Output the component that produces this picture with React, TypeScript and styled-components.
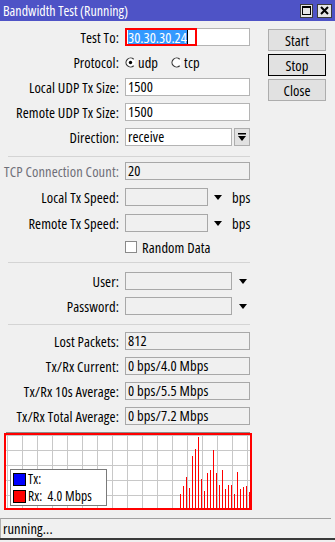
import React from "react";
import styled, { createGlobalStyle } from "styled-components";

const FONT = `"Open Sans", "Liberation Sans", Arial, sans-serif`;

const Global = createGlobalStyle`
  html, body { margin: 0; padding: 0; background: #f0f0f0; }
  body { font-family: ${FONT}; font-size: 14.5px; font-stretch: 75%; letter-spacing: 0.1px; color: #000; }
`;

const Window = styled.div`
  width: 335px;
  height: 542px;
  display: flex;
  flex-direction: column;
  background: #f0f0f0;
  overflow: hidden;
`;

const TitleBar = styled.div`
  height: 21px;
  flex: none;
  background: #4e53c6;
  color: #fff;
  display: flex;
  align-items: center;
  padding: 0 3px 0 3px;
  font-size: 14px;
  letter-spacing: 0;
`;

const TitleText = styled.div`
  flex: 1;
  white-space: nowrap;
`;

const TitleButtons = styled.div`
  display: flex;
  gap: 4px;
`;

const TitleBtn = styled.div<{ $w: number }>`
  width: ${(p) => p.$w}px;
  height: 14px;
  box-sizing: border-box;
  background: #e6e6e6;
  border: 1px solid #3c3c3c;
  display: flex;
  align-items: center;
  justify-content: center;
`;

const Body = styled.div`
  display: flex;
  padding-top: 7px;
`;

const Form = styled.div`
  width: 252px;
  display: flex;
  flex-direction: column;
`;

const Section = styled.div<{ $pt: number; $gap: number }>`
  display: flex;
  flex-direction: column;
  padding-top: ${(p) => p.$pt}px;
  gap: ${(p) => p.$gap}px;
`;

const Sep = styled.div<{ $mt: number }>`
  margin: ${(p) => p.$mt}px 0 0 8px;
  width: 242px;
  height: 1px;
  background: #d4d4d4;
`;

const Row = styled.div<{ $h?: number }>`
  display: flex;
  align-items: center;
  height: ${(p) => p.$h ?? 18}px;
`;

const Label = styled.div<{ $dim?: boolean }>`
  width: 119px;
  margin-right: 6px;
  text-align: right;
  white-space: nowrap;
  color: ${(p) => (p.$dim ? "#6f6f78" : "#000")};
`;

const Field = styled.div<{ $w?: number; $ro?: boolean }>`
  position: relative;
  width: ${(p) => p.$w ?? 125}px;
  height: 18px;
  box-sizing: border-box;
  border: 1px solid ${(p) => (p.$ro ? "#a8a8a8" : "#b4b4b4")};
  background: ${(p) => (p.$ro ? "#f0f0f0" : "#fff")};
  padding: 0 2px;
  line-height: 16px;
  white-space: nowrap;
  display: flex;
  align-items: center;
`;

const Selected = styled.span`
  background: #3399ff;
  color: #fff;
  line-height: 15px;
  letter-spacing: 0;
`;

const Caret = styled.span`
  display: inline-block;
  width: 1px;
  height: 15px;
  background: #000;
`;

const Annotation = styled.div`
  position: absolute;
  left: -1px;
  top: -1px;
  width: 72px;
  height: 18px;
  box-sizing: border-box;
  border: 2px solid #ff0000;
`;

const RadioItem = styled.div`
  display: flex;
  align-items: center;
  margin-right: 13px;
  svg {
    margin-right: 2px;
  }
`;

const DropBtn = styled.div`
  width: 16px;
  height: 18px;
  margin-left: 2px;
  box-sizing: border-box;
  background: #e1e1e1;
  border: 1px solid #adadad;
  display: flex;
  align-items: center;
  justify-content: center;
`;

const Arrow = styled.div<{ $ml: number }>`
  margin-left: ${(p) => p.$ml}px;
  display: flex;
  align-items: center;
`;

const Unit = styled.span`
  margin-left: 10px;
`;

const Check = styled.div`
  width: 12px;
  height: 12px;
  box-sizing: border-box;
  border: 1px solid #8a8a8a;
  background: #fff;
  margin: 0 5px 0 125px;
`;

const Buttons = styled.div`
  margin-left: 16px;
  padding-top: 1px;
  display: flex;
  flex-direction: column;
  gap: 3px;
`;

const Button = styled.div<{ $default?: boolean }>`
  width: 58px;
  height: 22px;
  box-sizing: border-box;
  background: #e1e1e1;
  border: 1px solid ${(p) => (p.$default ? "#000" : "#adadad")};
  display: flex;
  align-items: center;
  justify-content: center;
`;

const ChartWrap = styled.div`
  margin: 7px 0 0 4px;
  width: 248px;
  display: flex;
  flex-direction: column;
`;

const ChartEdge = styled.div`
  margin: 0 2px;
  height: 1px;
  background: #8c8c8c;
`;

const ChartBox = styled.div`
  position: relative;
  height: 77px;
  box-sizing: border-box;
  border: 2px solid #ff0000;
  background: #fff;
  svg {
    display: block;
  }
`;

const Legend = styled.div`
  position: absolute;
  left: 4px;
  top: 34px;
  width: 97px;
  height: 37px;
  box-sizing: border-box;
  border: 1px solid #7a7a7a;
  background: #fff;
  padding: 3px 0 0 2px;
  display: flex;
  flex-direction: column;
  gap: 4px;
  font-size: 13.5px;
`;

const LegendRow = styled.div`
  display: flex;
  align-items: center;
  height: 13px;
  line-height: 13px;
  white-space: pre;
`;

const Swatch = styled.div<{ $c: string }>`
  width: 13px;
  height: 13px;
  box-sizing: border-box;
  border: 1px solid #000;
  background: ${(p) => p.$c};
  margin-right: 2px;
`;

const Status = styled.div`
  margin: 8px 4px 0 0;
  height: 20px;
  box-sizing: border-box;
  border-top: 1px solid #a0a0a0;
  border-left: 1px solid #b0b0b0;
  padding-left: 2px;
  display: flex;
  align-items: center;
`;

const BottomEdge = styled.div`
  height: 2px;
  background: #3a3a3a;
`;

const Radio = ({ on }: { on: boolean }) => (
  <svg width="11" height="11" viewBox="0 0 11 11">
    <circle cx="5.5" cy="5.5" r="4.5" fill="#fff" />
    <path d="M8.7 2.3 A4.5 4.5 0 1 0 8.7 8.7" fill="none" stroke="#333" strokeWidth="1.2" />
    {on && <circle cx="5.5" cy="5.5" r="1.7" fill="#000" />}
  </svg>
);

const Tri = () => (
  <svg width="8" height="5" viewBox="0 0 8 5">
    <polygon points="0,0 8,0 4,5" fill="#000" />
  </svg>
);

const BARS = [494, 486, 477, 488, 456, 449, 437, 479, 491, 473, 470, 450, 473, 485, 470, 489, 485, 485, 494, 472, 489, 487, 486, 492];

const Chart = () => {
  const W = 244;
  const H = 73;
  const vx: number[] = [];
  for (let x = 1.5; x < W; x += 15) vx.push(x);
  const hy = [0.5, 15.5, 30.5, 45.5, 60.5];
  return (
    <svg width={W} height={H} viewBox={`0 0 ${W} ${H}`}>
      {vx.map((x) => (
        <line key={"v" + x} x1={x} y1={0} x2={x} y2={H} stroke="#c8c8c8" strokeWidth="1" />
      ))}
      {hy.map((y) => (
        <line key={"h" + y} x1={0} y1={y} x2={W} y2={y} stroke="#c8c8c8" strokeWidth="1" />
      ))}
      {BARS.map((t, i) => (
        <rect key={i} x={174 + i * 3} y={t - 435} width={1} height={H - (t - 435)} fill="#ff0000" />
      ))}
    </svg>
  );
};

export default function App() {
  return (
    <>
      <Global />
      <Window>
        <TitleBar>
          <TitleText>Bandwidth Test (Running)</TitleText>
          <TitleButtons>
            <TitleBtn $w={13}>
              <svg width="9" height="9" viewBox="0 0 9 9">
                <rect x="0.5" y="0.5" width="8" height="8" fill="none" stroke="#000" />
                <rect x="0" y="0" width="9" height="2" fill="#000" />
              </svg>
            </TitleBtn>
            <TitleBtn $w={15}>
              <svg width="9" height="9" viewBox="0 0 9 9">
                <path d="M1 1 L8 8 M8 1 L1 8" stroke="#000" strokeWidth="2" />
              </svg>
            </TitleBtn>
          </TitleButtons>
        </TitleBar>
        <Body>
          <Form>
            <Section $pt={0} $gap={7}>
              <Row>
                <Label>Test To:</Label>
                <Field>
                  <Selected>30.30.30.24</Selected>
                  <Caret />
                  <Annotation />
                </Field>
              </Row>
              <Row>
                <Label>Protocol:</Label>
                <RadioItem>
                  <Radio on />
                  udp
                </RadioItem>
                <RadioItem>
                  <Radio on={false} />
                  tcp
                </RadioItem>
              </Row>
              <Row>
                <Label>Local UDP Tx Size:</Label>
                <Field>1500</Field>
              </Row>
              <Row>
                <Label>Remote UDP Tx Size:</Label>
                <Field>1500</Field>
              </Row>
              <Row>
                <Label>Direction:</Label>
                <Field $w={107}>receive</Field>
                <DropBtn>
                  <svg width="8" height="8" viewBox="0 0 8 8">
                    <rect x="0" y="0" width="8" height="1.5" fill="#000" />
                    <polygon points="0,3 8,3 4,8" fill="#000" />
                  </svg>
                </DropBtn>
              </Row>
            </Section>
            <Sep $mt={10} />
            <Section $pt={5} $gap={8}>
              <Row>
                <Label $dim>TCP Connection Count:</Label>
                <Field $ro>20</Field>
              </Row>
              <Row>
                <Label>Local Tx Speed:</Label>
                <Field $ro $w={83} />
                <Arrow $ml={6}>
                  <Tri />
                </Arrow>
                <Unit>bps</Unit>
              </Row>
              <Row>
                <Label>Remote Tx Speed:</Label>
                <Field $ro $w={83} />
                <Arrow $ml={6}>
                  <Tri />
                </Arrow>
                <Unit>bps</Unit>
              </Row>
              <Row $h={14}>
                <Check />
                Random Data
              </Row>
            </Section>
            <Sep $mt={8} />
            <Section $pt={9} $gap={7}>
              <Row>
                <Label>User:</Label>
                <Field $ro $w={107} />
                <Arrow $ml={7}>
                  <Tri />
                </Arrow>
              </Row>
              <Row>
                <Label>Password:</Label>
                <Field $ro $w={107} />
                <Arrow $ml={7}>
                  <Tri />
                </Arrow>
              </Row>
            </Section>
            <Sep $mt={9} />
            <Section $pt={7} $gap={7}>
              <Row>
                <Label>Lost Packets:</Label>
                <Field $ro>812</Field>
              </Row>
              <Row>
                <Label>Tx/Rx Current:</Label>
                <Field $ro>0 bps/4.0 Mbps</Field>
              </Row>
              <Row>
                <Label>Tx/Rx 10s Average:</Label>
                <Field $ro>0 bps/5.5 Mbps</Field>
              </Row>
              <Row>
                <Label>Tx/Rx Total Average:</Label>
                <Field $ro>0 bps/7.2 Mbps</Field>
              </Row>
            </Section>
          </Form>
          <Buttons>
            <Button>Start</Button>
            <Button $default>Stop</Button>
            <Button>Close</Button>
          </Buttons>
        </Body>
        <ChartWrap>
          <ChartEdge />
          <ChartBox>
            <Chart />
            <Legend>
              <LegendRow>
                <Swatch $c="#0000ff" />
                Tx:
              </LegendRow>
              <LegendRow>
                <Swatch $c="#ff0000" />
                {"Rx:  4.0 Mbps"}
              </LegendRow>
            </Legend>
          </ChartBox>
        </ChartWrap>
        <Status>running...</Status>
        <BottomEdge />
      </Window>
    </>
  );
}
